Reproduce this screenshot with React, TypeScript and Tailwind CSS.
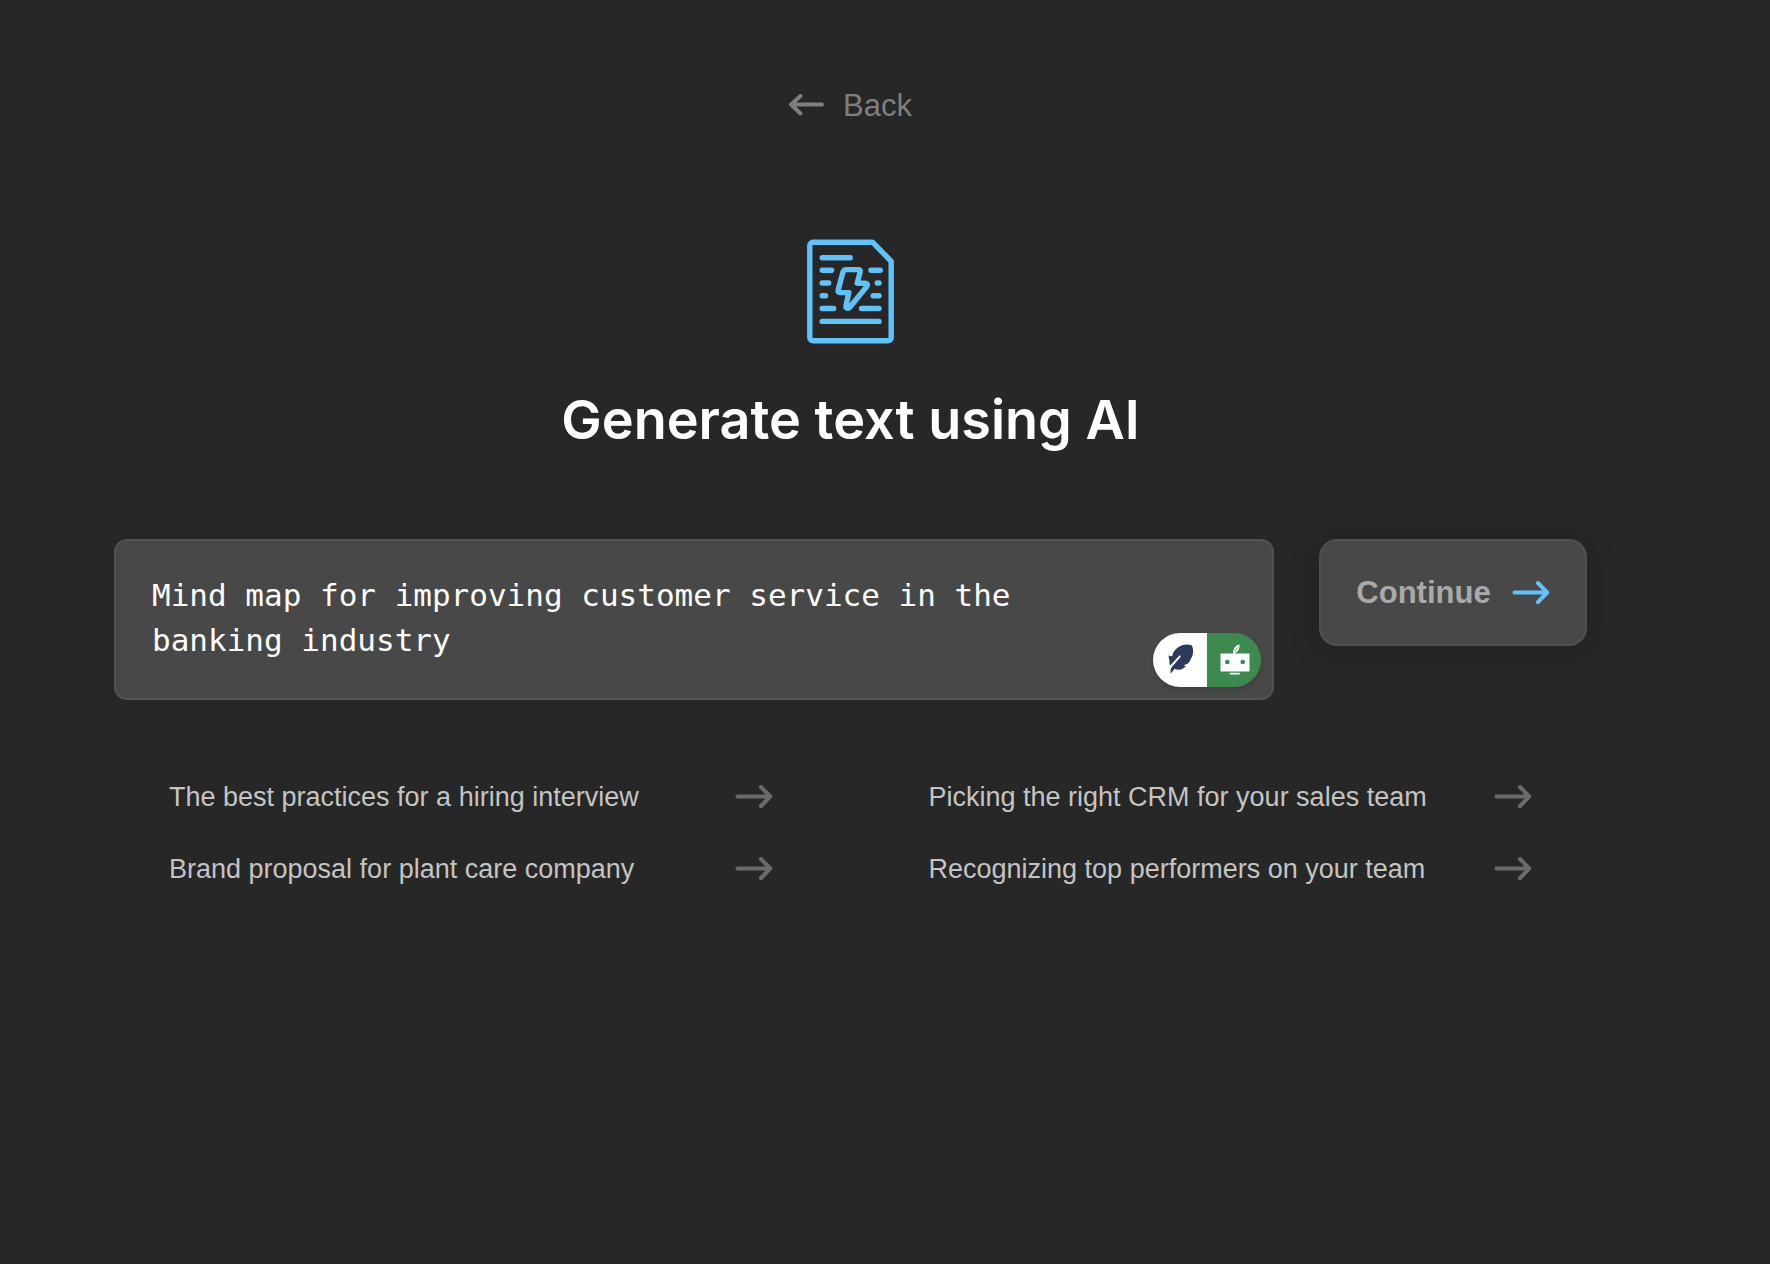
import { useState } from "react";

const suggestions = [
  "The best practices for a hiring interview",
  "Picking the right CRM for your sales team",
  "Brand proposal for plant care company",
  "Recognizing top performers on your team",
];

function ArrowRight({ className }: { className?: string }) {
  return (
    <svg
      aria-hidden="true"
      className={className}
      width="38"
      height="24"
      viewBox="0 0 38 24"
      fill="none"
      stroke="currentColor"
      strokeWidth="4"
      strokeLinecap="round"
      strokeLinejoin="round"
    >
      <path d="M2.5 11.5H35M26 2L35.2 11.5L26 21" />
    </svg>
  );
}

function ArrowLeft() {
  return (
    <svg
      aria-hidden="true"
      width="36"
      height="24"
      viewBox="0 0 36 24"
      fill="none"
      stroke="currentColor"
      strokeWidth="3.8"
      strokeLinecap="round"
      strokeLinejoin="round"
    >
      <path d="M33 10.5H2M11.5 2L2 10.5L11.5 19.5" />
    </svg>
  );
}

function DocumentIcon() {
  return (
    <svg
      aria-hidden="true"
      width="88"
      height="106"
      viewBox="0 0 88 106"
      fill="none"
      stroke="currentColor"
      strokeWidth="5.4"
      strokeLinecap="round"
      strokeLinejoin="round"
    >
      <path d="M6 3.2H65.5L84.2 22.3V98.4a3.4 3.4 0 0 1-3.4 3.4H6.2A3.4 3.4 0 0 1 2.8 98.4V6.4A3.4 3.4 0 0 1 6.2 3.2" />
      <path d="M15.2 18.8H43.2M15.2 31.2H24.7M64 31.2H73.3M15.2 44H21.7M70.2 44H72M15.2 56.7H18.6M66.2 56.7H72M15.2 69.5H26.7M54.6 69.5H72M15.2 82.4H72" />
      <path d="M39.4 30.6H51.2C52.8 30.6 53.6 31.4 53.2 32.8L50.2 44.2H58.4C60.4 44.2 61 45.8 60 47.2L43 68C41.2 70.2 38.6 69.4 39 66.6L41.8 53.6H33.2C31.4 53.6 30.8 52.6 31.2 51L36 33C36.6 31.2 37.6 30.6 39.4 30.6Z" />
    </svg>
  );
}

function Feather() {
  return (
    <svg aria-hidden="true" width="26" height="30" viewBox="0 0 26 30">
      <path
        fill="#2c3a5c"
        d="M23.6 1.2C19.2-.2 13.6.8 9.6 3.8C6.6 6 4.6 8.8 4.2 12.2L.8 11.4C.4 13.4 1.4 15.4 1.6 17.2C1.2 18.6 1.4 20 2.2 21.6L11.2 11.8C12 11 13.2 12 12.5 12.9L4.2 22.6C2.6 24.8 2.2 27 2.8 29.6C4.2 28.2 5.2 26.4 6.6 24.8C10.6 26.6 15.4 25.6 18 22L15.4 21.4L20 19.6C21.8 17.6 22.6 15.8 23.6 13.6C25.6 9.6 25.6 4.6 23.6 1.2Z"
      />
    </svg>
  );
}

function Robot() {
  return (
    <svg aria-hidden="true" width="30" height="31" viewBox="0 0 30 31">
      <path
        fill="#fff"
        d="M19.4.2C15.6 1.2 12.8 5 13.2 9.4H14.6C18.4 7.6 20.2 3.6 19.4.2ZM.5 9.4H29.5V27.6H.5ZM9.8 28.8H19.8V30.6H9.8Z"
      />
      <path fill="none" stroke="#3c8a4e" strokeWidth=".6" d="M17.8 3.4L14.8 7.8" />
      <circle cx="7.3" cy="18" r="2.3" fill="#3c8a4e" />
      <circle cx="22.7" cy="18" r="2.3" fill="#3c8a4e" />
    </svg>
  );
}

export default function App() {
  const [prompt, setPrompt] = useState(
    "Mind map for improving customer service in the banking industry",
  );

  return (
    <main className="flex min-h-screen flex-col items-center bg-[#272727] pt-[86px] pr-[183px] pl-[114px] font-['Liberation_Sans',sans-serif]">
      <button type="button" className="flex items-center gap-[18px] text-[31px] leading-[40px] text-[#7f7f7f]">
        <ArrowLeft />
        Back
      </button>

      <div className="mt-[113px] text-[#5ec3fb]">
        <DocumentIcon />
      </div>

      <h1 className="mt-[40px] text-center font-['Inter',sans-serif] text-[54px] leading-[70px] font-semibold text-white">
        Generate text using AI
      </h1>

      <form className="mt-[84px] flex w-full items-start gap-[45px]" onSubmit={(e) => e.preventDefault()}>
        <div className="relative flex-1">
          <textarea
            aria-label="Prompt"
            rows={2}
            value={prompt}
            onChange={(e) => setPrompt(e.target.value)}
            className="block h-[161px] w-full resize-none rounded-[13px] border-2 border-[#525252] bg-[#484848] py-[32px] pr-[180px] pl-[36px] font-['DejaVu_Sans_Mono',monospace] text-[31px] leading-[45px] text-white outline-none"
          />
          <div className="absolute right-[13px] bottom-[13px] flex h-[54px] w-[108px] overflow-hidden rounded-full shadow-md">
            <button type="button" aria-label="Writing suggestions" className="flex flex-1 items-center justify-center bg-white pb-[2px] pl-[2px]">
              <Feather />
            </button>
            <button type="button" aria-label="Writing assistant" className="flex flex-1 items-center justify-center bg-[#3c8a4e] pb-[2px] pl-[2px]">
              <Robot />
            </button>
          </div>
        </div>
        <button
          type="submit"
          className="flex h-[107px] w-[268px] items-center justify-center gap-[21px] rounded-[18px] border-2 border-[#505050] bg-[#484848] text-[31px] leading-[40px] font-bold text-[#a9a9a9] shadow-[0_4px_32px_rgba(0,0,0,0.18)]"
        >
          Continue
          <ArrowRight className="text-[#5ec3fb]" />
        </button>
      </form>

      <ul className="mt-[77px] grid w-full grid-cols-2 gap-x-[156px] gap-y-[32px] pr-[55px] pl-[55px]">
        {suggestions.map((text) => (
          <li key={text}>
            <button
              type="button"
              className="flex w-full items-center justify-between text-left text-[27px] leading-[40px] text-[#c4c4c4]"
            >
              {text}
              <ArrowRight className="text-[#6b6b6b]" />
            </button>
          </li>
        ))}
      </ul>
    </main>
  );
}
